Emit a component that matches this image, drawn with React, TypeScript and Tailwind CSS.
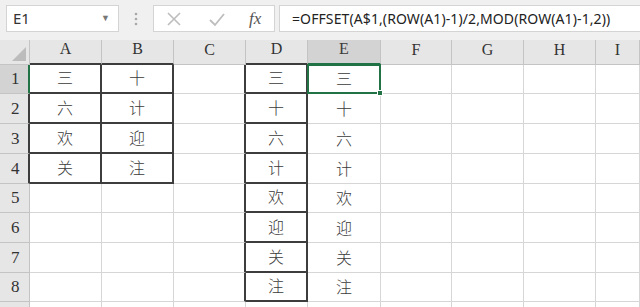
import React from 'react';

const COLS = ['A', 'B', 'C', 'D', 'E', 'F', 'G', 'H', 'I'];
const ROWS = [1, 2, 3, 4, 5, 6, 7, 8, 9];

const dataA = ['三', '六', '欢', '关'];
const dataB = ['十', '计', '迎', '注'];
const dataD = ['三', '十', '六', '计', '欢', '迎', '关', '注'];

// boxed ranges: A1:B4 and D1:D8 (col index 0 = A)
const isBoxed = (r: number, c: number) =>
    (r >= 1 && r <= 4 && (c === 0 || c === 1)) || (r >= 1 && r <= 8 && c === 3);

const cellText = (r: number, c: number) => {
    if (c === 0) return dataA[r - 1] ?? '';
    if (c === 1) return dataB[r - 1] ?? '';
    if (c === 3 || c === 4) return dataD[r - 1] ?? '';
    return '';
};

const Cell: React.FC<{ r: number; c: number }> = ({ r, c }) => {
    const right = isBoxed(r, c) || isBoxed(r, c + 1);
    const bottom = isBoxed(r, c) || isBoxed(r + 1, c);
    const selected = r === 1 && c === 4;
    return (
        <div
            className={`relative bg-white flex items-end justify-center pb-[3px] text-[16px] font-light text-[#3a3a3a] ${
                selected ? 'z-10' : ''
            } ${right ? 'border-r-2 border-r-[#3d3d3d]' : 'border-r border-r-[#d6d6d6]'} ${
                bottom ? 'border-b-2 border-b-[#3d3d3d]' : 'border-b border-b-[#d6d6d6]'
            }`}
            style={{ fontFamily: '"Noto Sans CJK SC", sans-serif' }}
        >
            {cellText(r, c)}
            {selected && (
                <div className="absolute -left-px -top-px -right-px -bottom-px border-2 border-[#217346]">
                    <div className="absolute -right-[4px] -bottom-[4px] w-[6px] h-[6px] bg-[#217346] border border-white" />
                </div>
            )}
        </div>
    );
};

export default function App() {
    return (
        <div className="w-[640px] h-[307px] overflow-hidden bg-white" style={{ fontFamily: '"Liberation Serif", serif' }}>
            {/* formula bar */}
            <div className="h-[40px] bg-[#f0f0f0] flex items-start pt-[5px] pl-[6px]">
                <div className="w-[113px] h-[27px] bg-white border border-[#d4d4d4] flex items-center pl-[6px] pr-[8px] justify-between">
                    <span className="text-[15px] text-[#333]" style={{ fontFamily: '"Noto Sans", sans-serif' }}>E1</span>
                    <span className="text-[9px] text-[#777]">▼</span>
                </div>
                <div className="w-[34px] h-[27px] flex items-center justify-center">
                    <svg width="4" height="14" viewBox="0 0 4 14">
                        <circle cx="2" cy="2" r="1.3" fill="#a8a8a8" />
                        <circle cx="2" cy="7" r="1.3" fill="#a8a8a8" />
                        <circle cx="2" cy="12" r="1.3" fill="#a8a8a8" />
                    </svg>
                </div>
                <div className="w-[122px] h-[27px] bg-white border border-[#d4d4d4] flex items-center">
                    <svg width="16" height="16" viewBox="0 0 16 16" className="ml-[12px]">
                        <path d="M2 2 L14 14 M14 2 L2 14" stroke="#bdbdbd" strokeWidth="1.6" fill="none" />
                    </svg>
                    <svg width="18" height="16" viewBox="0 0 18 16" className="ml-[26px]">
                        <path d="M2 9 L7 14 L16 3" stroke="#bdbdbd" strokeWidth="1.8" fill="none" />
                    </svg>
                    <span className="ml-[23px] text-[17px] italic text-[#555]">fx</span>
                </div>
                <div className="flex-1 h-[27px] bg-white border border-[#d4d4d4] border-r-0 ml-[4px] flex items-center pl-[12px]">
                    <span className="text-[14px] tracking-[0.1px] text-[#222]" style={{ fontFamily: '"Noto Sans", sans-serif' }}>
                        =OFFSET(A$1,(ROW(A1)-1)/2,MOD(ROW(A1)-1,2))
                    </span>
                </div>
            </div>

            {/* sheet grid */}
            <div className="grid grid-cols-[30px_72px_72px_72px_62px_73px_71px_72px_72px_1fr] grid-rows-[25px_29px_30px_30px_30px_29px_30px_30px_29px_30px]">
                {/* corner */}
                <div className="bg-[#e6e6e6] border-r border-r-[#c4c4c4] border-b border-b-[#c4c4c4] flex items-end justify-end pr-[3px] pb-[3px]">
                    <svg width="14" height="14" viewBox="0 0 14 14">
                        <path d="M14 0 L14 14 L0 14 Z" fill="#bcbcbc" />
                    </svg>
                </div>
                {COLS.map((col, c) => (
                    <div
                        key={col}
                        className={`flex items-end justify-center pb-[2px] text-[16px] ${
                            c === 4
                                ? 'bg-[#d3d3d3] text-[#3a3a3a] border-b-2 border-b-[#217346] border-r border-r-[#c4c4c4]'
                                : `bg-[#e6e6e6] text-[#333] border-r border-r-[#c4c4c4] ${
                                      isBoxed(1, c) ? 'border-b-2 border-b-[#3d3d3d]' : 'border-b border-b-[#c4c4c4]'
                                  }`
                        }`}
                    >
                        {col}
                    </div>
                ))}
                {ROWS.map(r => (
                    <React.Fragment key={r}>
                        <div
                            className={`flex items-end pl-[11px] pb-[2px] text-[17px] text-[#333] border-b border-b-[#c4c4c4] ${
                                r === 1
                                    ? 'bg-[#d3d3d3] border-r-2 border-r-[#217346]'
                                    : isBoxed(r, 0)
                                    ? 'bg-[#e6e6e6] border-r-2 border-r-[#3d3d3d]'
                                    : 'bg-[#e6e6e6] border-r border-r-[#c4c4c4]'
                            }`}
                        >
                            {r < 9 ? r : ''}
                        </div>
                        {COLS.map((col, c) => (
                            <Cell key={col + r} r={r} c={c} />
                        ))}
                    </React.Fragment>
                ))}
            </div>
        </div>
    );
}
